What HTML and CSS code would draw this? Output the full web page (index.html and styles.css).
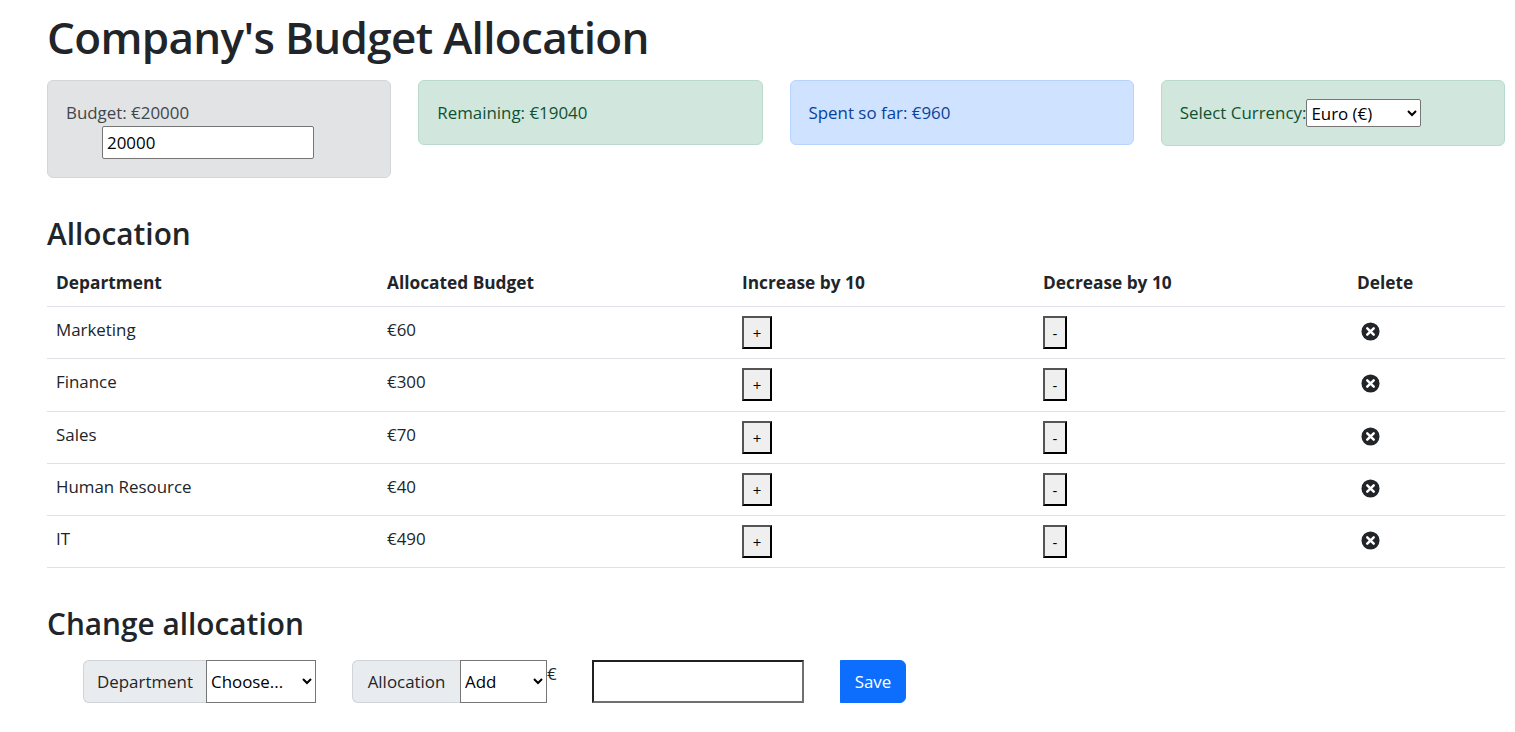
FILE: index.html
```html
<!DOCTYPE html>
<html lang="en">
<head>
    <meta charset="UTF-8">
    <meta name="viewport" content="width=device-width, initial-scale=1.0">
    <title>Company's Budget Allocation</title>
    <link rel="stylesheet" href="styles.css">
</head>
<body>
    <div class="container">
        <h1>Company's Budget Allocation</h1>

        <div class="cards">
            <div class="alert alert-grey">
                <span>Budget: €20000</span>
                <input class="budget-input" type="number" value="20000">
            </div>
            <div class="alert alert-green">Remaining: €19040</div>
            <div class="alert alert-blue">Spent so far: €960</div>
            <div class="alert alert-green alert-currency">
                <span>Select Currency:</span><select class="currency-select"><option>Euro (€)</option></select>
            </div>
        </div>

        <h2 class="heading-allocation">Allocation</h2>
        <table class="table">
            <thead>
                <tr>
                    <th>Department</th>
                    <th>Allocated Budget</th>
                    <th>Increase by 10</th>
                    <th>Decrease by 10</th>
                    <th>Delete</th>
                </tr>
            </thead>
            <tbody>
                <tr>
                    <td>Marketing</td>
                    <td>€60</td>
                    <td><button class="btn-step">+</button></td>
                    <td><button class="btn-step">-</button></td>
                    <td><svg class="icon-delete" viewBox="0 0 20 20"><circle cx="10" cy="10" r="9.5"/><path d="M6.6 6.6l6.8 6.8M13.4 6.6l-6.8 6.8"/></svg></td>
                </tr>
                <tr class="row-tall">
                    <td>Finance</td>
                    <td>€300</td>
                    <td><button class="btn-step">+</button></td>
                    <td><button class="btn-step">-</button></td>
                    <td><svg class="icon-delete" viewBox="0 0 20 20"><circle cx="10" cy="10" r="9.5"/><path d="M6.6 6.6l6.8 6.8M13.4 6.6l-6.8 6.8"/></svg></td>
                </tr>
                <tr>
                    <td>Sales</td>
                    <td>€70</td>
                    <td><button class="btn-step">+</button></td>
                    <td><button class="btn-step">-</button></td>
                    <td><svg class="icon-delete" viewBox="0 0 20 20"><circle cx="10" cy="10" r="9.5"/><path d="M6.6 6.6l6.8 6.8M13.4 6.6l-6.8 6.8"/></svg></td>
                </tr>
                <tr>
                    <td>Human Resource</td>
                    <td>€40</td>
                    <td><button class="btn-step">+</button></td>
                    <td><button class="btn-step">-</button></td>
                    <td><svg class="icon-delete" viewBox="0 0 20 20"><circle cx="10" cy="10" r="9.5"/><path d="M6.6 6.6l6.8 6.8M13.4 6.6l-6.8 6.8"/></svg></td>
                </tr>
                <tr>
                    <td>IT</td>
                    <td>€490</td>
                    <td><button class="btn-step">+</button></td>
                    <td><button class="btn-step">-</button></td>
                    <td><svg class="icon-delete" viewBox="0 0 20 20"><circle cx="10" cy="10" r="9.5"/><path d="M6.6 6.6l6.8 6.8M13.4 6.6l-6.8 6.8"/></svg></td>
                </tr>
            </tbody>
        </table>

        <h2 class="heading-change">Change allocation</h2>
        <div class="change-row">
            <div class="input-group group-department">
                <label class="group-label label-department">Department</label>
                <select class="group-select select-department"><option>Choose...</option></select>
            </div>
            <div class="input-group group-allocation">
                <label class="group-label label-allocation">Allocation</label>
                <select class="group-select select-allocation"><option>Add</option></select>
            </div>
            <span class="currency-sign">€</span>
            <input class="cost-input" type="number">
            <button class="btn-save">Save</button>
        </div>
    </div>
</body>
</html>
```

FILE: styles.css
```css
body {
    margin: 0;
    font-family: "Open Sans", "Noto Sans", Arial, sans-serif;
    font-size: 16.9px;
    color: #212529;
    background-color: #ffffff;
}

.container {
    padding: 0 10px 0 47px;
}

h1 {
    margin: 0;
    padding: 8px 0 1px;
    font-size: 44px;
    line-height: 58px;
    font-weight: 600;
    letter-spacing: -0.67px;
}

h2 {
    margin: 0;
    font-size: 29.8px;
    line-height: 38px;
    font-weight: 600;
}

.cards {
    display: grid;
    grid-template-columns: repeat(4, 1fr);
    column-gap: 27px;
    align-items: start;
    margin-top: 13px;
}

.alert {
    box-sizing: border-box;
    padding: 20px 18px;
    height: 65px;
    line-height: 24px;
    border: 1px solid transparent;
    border-radius: 6px;
}

.alert-grey {
    height: 98px;
    color: #41464b;
    background-color: #e2e3e5;
    border-color: #d3d6d8;
}

.alert-green {
    color: #0f5132;
    background-color: #d1e7dd;
    border-color: #badbcc;
}

.alert-blue {
    color: #084298;
    background-color: #cfe2ff;
    border-color: #b6d4fe;
}

.alert-currency {
    height: 66px;
    padding-top: 18px;
    padding-bottom: 18px;
    display: flex;
    align-items: center;
}

.budget-input {
    display: block;
    box-sizing: border-box;
    width: 212px;
    height: 33px;
    margin: 1px 0 0 36px;
    padding: 1px 4px;
    font-family: inherit;
    font-size: 16.9px;
    color: #000000;
    background: #ffffff;
    border: 1px solid #767676;
    border-radius: 2px;
}

.currency-select {
    box-sizing: border-box;
    width: 115px;
    height: 28px;
    font-family: inherit;
    font-size: 16.9px;
    color: #000000;
    background: #ffffff;
    border: 1px solid #767676;
    border-radius: 2px;
}

.heading-allocation {
    margin-top: 37px;
}

.table {
    width: 1458px;
    margin-top: 7px;
    border-collapse: collapse;
    table-layout: fixed;
}

.table th,
.table td {
    box-sizing: border-box;
    text-align: left;
    vertical-align: top;
    border-bottom: 1px solid #dee2e6;
}

.table th {
    height: 46px;
    padding: 11px 9px 8px;
    font-size: 17.3px;
    line-height: 24px;
    font-weight: 700;
}

.table td {
    height: 52px;
    padding: 10px 9px 8px;
    line-height: 26px;
    color: #212529;
}

.table .row-tall td {
    height: 53px;
}

.table th:nth-child(1) { width: 331px; }
.table th:nth-child(2) { width: 355px; }
.table th:nth-child(3) { width: 301px; }
.table th:nth-child(4) { width: 314px; }

.btn-step {
    display: block;
    box-sizing: border-box;
    height: 33px;
    margin-top: -1px;
    padding: 2px 0 0;
    font-family: inherit;
    font-size: 15px;
    color: #000000;
    background-color: #efefef;
    border: 2px outset #000000;
}

.table td:nth-child(3) .btn-step { width: 30px; }
.table td:nth-child(4) .btn-step { width: 24px; }

.icon-delete {
    display: block;
    width: 19px;
    height: 19px;
    margin: 5px 0 0 4px;
}

.icon-delete circle {
    fill: #212529;
}

.icon-delete path {
    fill: none;
    stroke: #ffffff;
    stroke-width: 2.6;
    stroke-linecap: round;
}

.heading-change {
    margin-top: 37px;
}

.change-row {
    display: flex;
    align-items: flex-start;
    margin-top: 17px;
    padding-left: 36px;
}

.input-group {
    display: flex;
    height: 43px;
}

.group-department {
    width: 233px;
}

.group-allocation {
    margin-left: 36px;
    width: 195px;
}

.group-label {
    box-sizing: border-box;
    display: flex;
    align-items: center;
    justify-content: center;
    color: #212529;
    background-color: #e9ecef;
    border: 1px solid #ced4da;
    border-right: 0;
    border-radius: 6px 0 0 6px;
}

.label-department { width: 123px; }
.label-allocation { width: 108px; }

.group-select {
    box-sizing: border-box;
    height: 43px;
    font-family: inherit;
    font-size: 16.9px;
    color: #000000;
    background: #ffffff;
    border: 1px solid #767676;
    border-radius: 0;
}

.select-department { width: 110px; }
.select-allocation { width: 87px; }

.currency-sign {
    width: 45px;
    line-height: 28px;
    color: #212529;
}

.cost-input {
    box-sizing: border-box;
    width: 212px;
    height: 43px;
    padding: 1px 3px;
    background: #ffffff;
    border: 2px solid;
    border-color: #212121 #6f6f6f #6f6f6f #212121;
}

.btn-save {
    box-sizing: border-box;
    width: 66px;
    height: 43px;
    margin-left: 36px;
    font-family: inherit;
    font-size: 16.9px;
    color: #ffffff;
    background-color: #0d6efd;
    border: 1px solid #0d6efd;
    border-radius: 0 6px 6px 0;
}
```
